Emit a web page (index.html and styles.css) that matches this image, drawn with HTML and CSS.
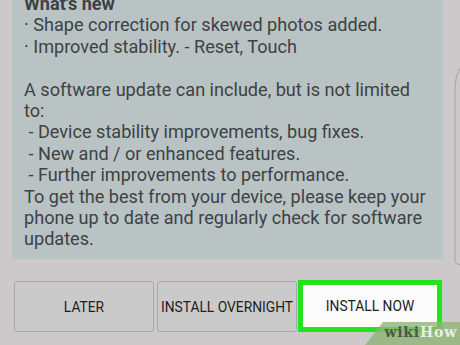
FILE: index.html
```html
<!DOCTYPE html>
<html lang="en">
<head>
  <meta charset="UTF-8" />
  <title>Software update</title>
  <link rel="stylesheet" href="styles.css">
</head>
<body>

<div class="screen">
  <div class="notes">
    <div class="notes-text">
      <p class="title">What's new</p>
      <p>· Shape correction for skewed photos added.</p>
      <p>· Improved stability. - Reset, Touch</p>
      <p>&nbsp;</p>
      <p>A software update can include, but is not limited to:</p>
      <p>&nbsp;- Device stability improvements, bug fixes.</p>
      <p>&nbsp;- New and / or enhanced features.</p>
      <p>&nbsp;- Further improvements to performance.</p>
      <p>To get the best from your device, please keep your phone up to date and regularly check for software updates.</p>
    </div>
  </div>

  <div class="actions">
    <button class="btn">LATER</button>
    <button class="btn">INSTALL OVERNIGHT</button>
    <button class="btn btn-now">INSTALL NOW</button>
  </div>

  <!-- edge of the next card -->
  <svg class="edge" width="12" height="200" viewBox="0 0 12 200">
    <path d="M11 1 C5 8 4 16 4 30 L4 195 C4 198 6 199 9 200" fill="none" stroke="#a3a3a3" stroke-width="1"/>
  </svg>

  <div class="watermark"><span class="wiki">wiki</span><span class="how">How</span></div>
</div>

</body>
</html>
```

FILE: styles.css
```css
body { margin: 0; background: #cdc9ca; font-family: Roboto, "Liberation Sans", sans-serif; }
.screen { position: relative; width: 460px; height: 345px; overflow: hidden; }
.notes {
  margin-left: 12px; width: 431px; height: 259px;
  background: #b9c3c4; overflow: hidden;
}
.notes-text {
  margin-top: -7px; padding: 0 14px 0 12px;
  font-size: 18.1px; line-height: 21.4px; color: #3d4244;
}
.notes-text p { margin: 0; }
.notes-text .title { font-weight: bold; }
.actions {
  display: flex; gap: 3px;
  margin-top: 22px; padding-left: 14px;
}
.btn {
  width: 140px; height: 51px;
  background: #cbcaca; border: 1px solid #a8a8a8; border-radius: 3px;
  font-family: Roboto, "Liberation Sans", sans-serif;
  font-size: 13.8px; color: #1e1e1e; padding: 0; white-space: nowrap;
}
.btn-now {
  width: 144px; height: 52px; margin-top: -1px; margin-left: -2px;
  background: #fbfbfb; border: 5px solid #22e31c; border-radius: 0;
}
.edge { position: absolute; left: 451px; top: 65px; }
.watermark {
  position: absolute; right: 0; bottom: 0; width: 95px; height: 23px;
  background: rgba(145, 180, 118, 0.8);
  clip-path: polygon(18px 0, 100% 0, 100% 100%, 0 100%);
  font-family: "DejaVu Serif", "Liberation Serif", serif; font-weight: bold;
  font-size: 14px; letter-spacing: 0.8px; line-height: 21px; text-align: right;
  padding-right: 3px; box-sizing: border-box;
}
.watermark .wiki { color: #4d5a45; }
.watermark .how { color: #e8efe3; }
```
